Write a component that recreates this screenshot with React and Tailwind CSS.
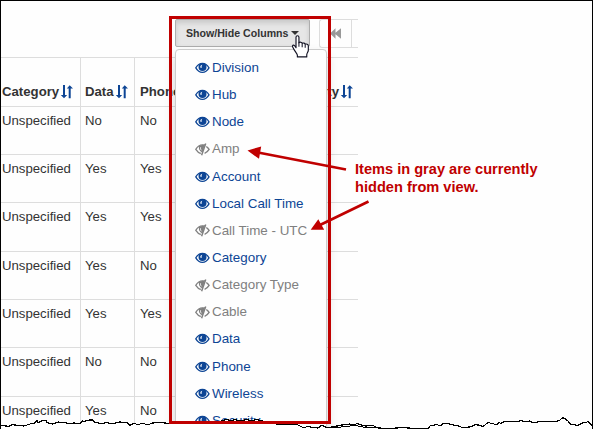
const ROWS = [
  { data: "No", phone: "No", h: "h-[48px]" },
  { data: "Yes", phone: "Yes", h: "h-[48px]" },
  { data: "Yes", phone: "Yes", h: "h-[49px]" },
  { data: "Yes", phone: "No", h: "h-[48px]" },
  { data: "Yes", phone: "Yes", h: "h-[48px]" },
  { data: "No", phone: "No", h: "h-[49px]" },
  { data: "Yes", phone: "No", h: "h-[32px]" },
];

const COLUMNS = [
  ["Division", true],
  ["Hub", true],
  ["Node", true],
  ["Amp", false],
  ["Account", true],
  ["Local Call Time", true],
  ["Call Time - UTC", false],
  ["Category", true],
  ["Category Type", false],
  ["Cable", false],
  ["Data", true],
  ["Phone", true],
  ["Wireless", true],
  ["Security", true],
];

const TORN =
  "M0 425L9 426.5 12 424.5 18 425.5 24 426 30 424 32 423 34 423.5 37 420.5 38 423 41 421 46 420.5 47 422.5 50 423.5 53 424 58 422 64 422.5 70 424 74 423 80 423.5 82 421 84 421.5 90 420 93 420 95 422.5 102 423.5 107 422.5 112 424 120 422 127 422.5 130 425.5 134 423 138 425 142 423 148 425 152 423 160 422.5 169 423.5 195 423 220 422 222 420.5 227 419.5 231 421 235 419.5 240 421 247 419.5 251 421 257 419.5 264 421.5 277 424 285 424.5 296 424 300 426 304 428 308 426 312 427.5 318 428 322 425 326 427.5 332 427 337 426 342 425 350 424 354 425 357 423.5 361 425 366 426 373 425.5 378 428 390 428.5 403 427.5 414 428.5 428 428.5 430 426 437 424.5 440 426 443 423.5 450 424 453 425 459 426 462 427.5 470 427 475 424.8 479 425 483 426.5 488 422.5 494 424 497 425 499 422.5 501 423.5 504 421.7 518 421.7 521 420.5 525 422 530 421 533 423 540 421.5 556 421.5 560 420 562 418 564 418 568 421 570 424 578 425.5 582 423 586 422.5 588 421.5 592.5 426";

function SortIcon() {
  return (
    <svg className="mb-[2px] ml-px h-[14px] w-[14px] shrink-0 text-[#0d4595]" viewBox="0 0 14 14" fill="currentColor">
      <path d="M3 0h2v10h2.200L4 13.200.8 10H3z" />
      <path d="M8.700 13.200V3.600H6.800L9.700.3 13 3.600h-2.300v9.600z" />
    </svg>
  );
}

function EyeIcon() {
  return (
    <svg className="h-[12px] w-[15px] shrink-0" viewBox="0 0 15 12">
      <path d="M.8 5.800C2.600 2.700 4.800 1.300 7.400 1.300s4.800 1.400 6.600 4.500C12.200 8.900 10.100 10.300 7.400 10.300S2.600 8.900.8 5.800z" fill="none" stroke="currentColor" strokeWidth="1.300" />
      <circle cx="7.500" cy="4.900" r="4" fill="currentColor" />
      <path d="M5.300 5.200c0-1.400.8-2.300 2.100-2.500-.8.800-.9 1.600-.6 2.600.2.700-1.400.8-1.500-.1z" fill="white" />
    </svg>
  );
}

function EyeOffIcon() {
  return (
    <svg className="h-[13px] w-[15px] shrink-0" viewBox="0 0 15 13">
      <path d="M8.600 2C5.400 1.600 2.600 3.300.8 6.400c1.400 2.200 3 3.600 5 4.100" fill="none" stroke="currentColor" strokeWidth="1.300" />
      <path d="M4 3 10.200 1 7.400 9.200C4.900 8.700 3.400 6 4 3z" fill="currentColor" />
      <path d="M5.600 4.300c-.3 1.300 0 2.200.9 3" fill="none" stroke="white" strokeWidth=".9" />
      <path d="M10.700.5 6.600 12.300" stroke="currentColor" strokeWidth="1.500" />
      <path d="M11.300 3.500c1.200.8 2 1.700 2.800 2.900-1.300 2.100-2.700 3.300-4.500 3.900" fill="none" stroke="currentColor" strokeWidth="1.400" />
    </svg>
  );
}

function HandCursor() {
  return (
    <svg className="absolute left-[291px] top-[35px] h-[24px] w-[19px]" viewBox="0 0 18 23">
      <path
        d="M4.700 2.200c0-2 2.800-2 2.800 0v5.300c.6-1 2.900-.8 3.100.6.800-.8 2.700-.4 2.900.8 1-.6 3 0 3 1.500v4.300c0 1.700-1.500 2.600-1.500 4.300v2H6v-1.700c0-1-3-4.400-4.500-7.800-.7-1.600.8-2.400 1.700-1.400l1.500 2.100z"
        fill="white" stroke="#111122" strokeWidth="1.100" strokeLinejoin="round"
      />
      <path d="M7.500 7v4.300M10.600 8.200v3.600M13.500 9.200v3" stroke="#111122" strokeWidth="1" />
    </svg>
  );
}

function TornEdge() {
  return (
    <svg className="absolute left-0 top-[409px] h-[20px] w-[593px]" viewBox="0 409 593 20" shapeRendering="crispEdges">
      <path d={TORN + "V430H0z"} fill="white" />
      <path d={TORN} fill="none" stroke="black" strokeWidth="1.200" />
      <path d="M333 427.500L338 428 343 426.500 347 427 352 425.500 358 426 363 427 369 427.500 374 427 384 428.500" fill="none" stroke="black" strokeWidth="1" />
    </svg>
  );
}

export default function App() {
  return (
    <div className="relative h-[429px] w-[593px] overflow-hidden border-x border-t border-black bg-[#fefefe] font-['Liberation_Sans',Arial,sans-serif] text-[13.2px] leading-[18px] text-[#333]">
      <div className="w-[357px]">
        <div className="flex h-[56px] items-start pl-[174px] pt-[18px]">
          <button className="flex h-[28px] w-[135px] shrink-0 items-center rounded-[2px] border border-[#adadad] bg-[#e6e6e6] pl-[10px] text-[10.6px] font-bold shadow-[inset_0_3px_5px_rgba(0,0,0,0.125)]">
            <span className="whitespace-nowrap">Show/Hide Columns</span>
            <span className="ml-[3px] border-x-[4px] border-t-[4px] border-x-transparent border-t-[#333]" />
          </button>
          <div className="ml-[9px] flex h-[29px] flex-1 rounded-l-[3px] border-y border-l border-[#ddd]">
            <div className="flex w-[32px] items-center justify-center border-r border-[#ddd] text-[#999]">
              <svg className="h-[11px] w-[12px]" viewBox="0 0 12 11" fill="currentColor">
                <path d="M0 5.500 5.500.3v4.500L11 .3v10.400L5.500 6.200v4.500z" />
              </svg>
            </div>
          </div>
        </div>
        <div className="flex h-[49px] border-t border-[#ddd] font-bold">
          <div className="flex w-[80px] items-end border-r border-[#ddd] pb-[5px] pl-px">
            Category<SortIcon />
          </div>
          <div className="flex w-[54px] items-end border-r border-[#ddd] pb-[5px] pl-[4px]">
            Data<SortIcon />
          </div>
          <div className="flex flex-1 items-end justify-between pb-[5px] pl-[5px] pr-[4px]">
            <span>Phone</span>
            <span className="flex items-end">Security<SortIcon /></span>
          </div>
        </div>
        {ROWS.map((r, i) => (
          <div key={i} className={`flex border-t border-[#ddd] ${r.h}`}>
            <div className="w-[80px] border-r border-[#ddd] pl-px pt-[5px]">Unspecified</div>
            <div className="w-[54px] border-r border-[#ddd] pl-[4px] pt-[5px]">{r.data}</div>
            <div className="flex-1 pl-[5px] pt-[5px]">{r.phone}</div>
          </div>
        ))}
      </div>

      <div className="absolute left-[174px] top-[48px] h-[390px] w-[152px] rounded-[4px] border border-[#ccc] bg-[#fefefe] pt-[4.5px] text-[13.4px] shadow-[0_6px_12px_rgba(0,0,0,0.175)]">
        {COLUMNS.map(([name, shown]) => (
          <div
            key={name}
            className={`flex h-[27.15px] items-center gap-[2px] whitespace-nowrap pl-[19px] ${shown ? "text-[#0d4595]" : "text-[#808080]"}`}
          >
            {shown ? <EyeIcon /> : <EyeOffIcon />}
            <span>{name}</span>
          </div>
        ))}
      </div>

      <div className="absolute -left-px -top-px h-[429px] w-[593px]">
        <TornEdge />
        <div className="absolute left-[169px] top-[16px] h-[408px] w-[162px] border-[3px] border-[#c00000]" />
        <svg className="absolute left-0 top-0 h-[429px] w-[593px]" viewBox="0 0 593 429" fill="#c00000">
          <path d="M346 169.500 258 152.500M368.500 201.500 320 225" stroke="#c00000" strokeWidth="2.700" />
          <path d="M247.500 150.500 261.200 146.500 259 158.800zM310.700 229.700 318.300 219.300 324.200 229.700z" />
        </svg>
        <div className="absolute left-[355px] top-[160px] whitespace-nowrap text-[14.6px] font-bold leading-[18px] text-[#c00000]">
          Items in gray are currently
          <br />
          hidden from view.
        </div>
        <HandCursor />
      </div>
    </div>
  );
}
